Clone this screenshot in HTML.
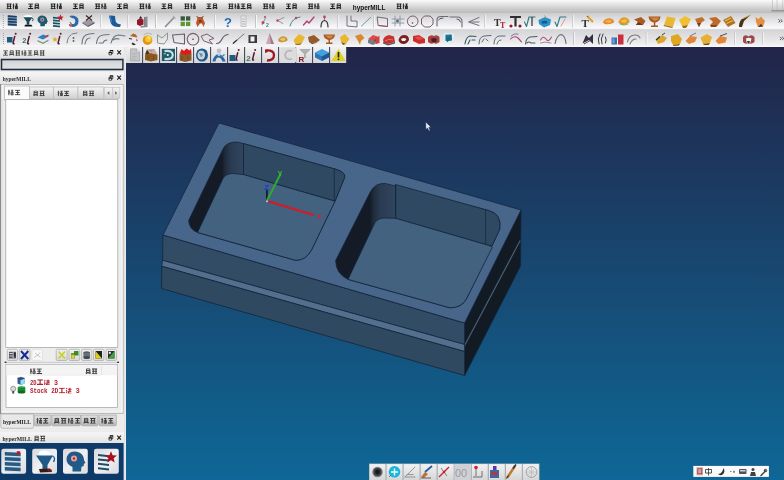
<!DOCTYPE html>
<html><head><meta charset="utf-8">
<style>
*{margin:0;padding:0}
html,body{width:784px;height:480px;overflow:hidden;background:#e8e8e8}
#wrap{position:absolute;left:0;top:0;width:784px;height:480px;will-change:transform}
svg{position:absolute;left:0;top:0;display:block}
</style></head><body><div id="wrap">
<svg width="784" height="480" viewBox="0 0 784 480" font-family="Liberation Sans">

<defs>
<symbol id="gl0" viewBox="0 0 6 6" preserveAspectRatio="none"><path d="M0 0.6 H6 M0.4 3 H5.6 M0 5.4 H6 M1.5 0 V6 M4.5 0 V6" stroke="#000" stroke-width="1.05" fill="none"/></symbol>
<symbol id="gl1" viewBox="0 0 6 6" preserveAspectRatio="none"><path d="M1 0 V6 M0 1.8 H2 M0 4 L2 3 M3 0.6 H6 M3.3 2.6 H5.7 V5.6 H3.3Z M4.5 0.6 V5.6" stroke="#000" stroke-width="1.0" fill="none"/></symbol>
<symbol id="gl2" viewBox="0 0 6 6" preserveAspectRatio="none"><path d="M0.3 0.7 H5.7 M3 0.7 V5.3 M0 5.3 H6 M1 3 H5" stroke="#000" stroke-width="1.1" fill="none"/></symbol>
<symbol id="gl3" viewBox="0 0 6 6" preserveAspectRatio="none"><path d="M1.2 0.5 H4.8 V4 H1.2Z M1.2 2.2 H4.8 M0 4.6 H6 M1.8 4.6 L0.6 6 M4.2 4.6 L5.4 6" stroke="#000" stroke-width="1.0" fill="none"/></symbol>
<symbol id="gr0" viewBox="0 0 6 6" preserveAspectRatio="none"><path d="M0.3 0.7 H5.7 M3 0.7 V5.3 M0 5.3 H6" stroke="#b0202c" stroke-width="1.15" fill="none"/></symbol>
<symbol id="gr1" viewBox="0 0 6 6" preserveAspectRatio="none"><path d="M0.6 0.6 L1.6 1.4 M0.3 2.6 L1.4 3.2 M0.4 5.8 L1.6 3.8 M2.5 1.8 H6 M4.2 0.2 V3.8 M2.6 3.8 H5.8 M3.4 3.8 L2.6 5.8 H5.8" stroke="#b0202c" stroke-width="1.05" fill="none"/></symbol>
<linearGradient id="gMenu" x1="0" y1="0" x2="0" y2="1"><stop offset="0" stop-color="#fafafa"/><stop offset="0.3" stop-color="#e6e6e6"/><stop offset="0.7" stop-color="#cbcbcb"/><stop offset="1" stop-color="#bcbcbc"/></linearGradient>
<linearGradient id="gTb1" x1="0" y1="0" x2="0" y2="1"><stop offset="0" stop-color="#cdcdcf"/><stop offset="0.45" stop-color="#e4e4e6"/><stop offset="0.85" stop-color="#f8f8fa"/><stop offset="1" stop-color="#f0f0f2"/></linearGradient>
<linearGradient id="gTb2" x1="0" y1="0" x2="0" y2="1"><stop offset="0" stop-color="#d6d6d8"/><stop offset="0.5" stop-color="#e4e4e6"/><stop offset="0.85" stop-color="#f0f0f2"/><stop offset="1" stop-color="#fafafa"/></linearGradient>
<linearGradient id="gVp" x1="0" y1="47" x2="0" y2="480" gradientUnits="userSpaceOnUse"><stop offset="0" stop-color="#22254a"/><stop offset="0.05" stop-color="#21284d"/><stop offset="0.49" stop-color="#18466f"/><stop offset="0.93" stop-color="#0f6391"/><stop offset="1" stop-color="#0e6797"/></linearGradient>
<linearGradient id="gTitle" x1="0" y1="0" x2="0" y2="1"><stop offset="0" stop-color="#f6f6f6"/><stop offset="1" stop-color="#e2e2e2"/></linearGradient>
<linearGradient id="gSearch" x1="0" y1="0" x2="0" y2="1"><stop offset="0" stop-color="#d2d2d4"/><stop offset="1" stop-color="#e4e4e8"/></linearGradient>
<linearGradient id="gTab" x1="0" y1="0" x2="0" y2="1"><stop offset="0" stop-color="#f4f4f4"/><stop offset="0.5" stop-color="#e2e2e2"/><stop offset="1" stop-color="#cfcfcf"/></linearGradient>
<linearGradient id="gBtab" x1="0" y1="0" x2="0" y2="1"><stop offset="0" stop-color="#dedede"/><stop offset="0.6" stop-color="#cecece"/><stop offset="1" stop-color="#b4b4b4"/></linearGradient>
<linearGradient id="gBtn" x1="0" y1="0" x2="0" y2="1"><stop offset="0" stop-color="#f0f0f0"/><stop offset="1" stop-color="#d8d8d8"/></linearGradient>
<linearGradient id="gTile" x1="0" y1="0" x2="1" y2="1"><stop offset="0" stop-color="#d8d8dc"/><stop offset="0.5" stop-color="#f0f0f2"/><stop offset="1" stop-color="#dcdce0"/></linearGradient>
<linearGradient id="gVtb" x1="0" y1="0" x2="0" y2="1"><stop offset="0" stop-color="#f2f2f2"/><stop offset="1" stop-color="#d6d6d8"/></linearGradient>
<linearGradient id="lw1" x1="222" y1="0" x2="244" y2="0" gradientUnits="userSpaceOnUse"><stop offset="0" stop-color="#141b26"/><stop offset="0.15" stop-color="#202c3c"/><stop offset="0.4" stop-color="#2a3b51"/><stop offset="1" stop-color="#30465f"/></linearGradient>
<linearGradient id="lw2" x1="370" y1="0" x2="395" y2="0" gradientUnits="userSpaceOnUse"><stop offset="0" stop-color="#141b26"/><stop offset="0.15" stop-color="#202c3c"/><stop offset="0.4" stop-color="#2a3b51"/><stop offset="1" stop-color="#30465f"/></linearGradient>
</defs>

<rect x="0" y="0" width="784" height="13" fill="url(#gMenu)"/>
<rect x="0" y="13" width="784" height="17" fill="url(#gTb1)"/>
<rect x="0" y="29.5" width="784" height="1" fill="#c4c4c6"/>
<rect x="0" y="30.5" width="784" height="16.5" fill="url(#gTb2)"/>
<rect x="126" y="47" width="658" height="433" fill="url(#gVp)"/>
<use href="#gl0" x="6.40" y="3.3" width="5.4" height="6" opacity="0.85"/><use href="#gl1" x="12.50" y="3.3" width="5.4" height="6" opacity="0.85"/>
<use href="#gl2" x="28.00" y="3.3" width="5.4" height="6" opacity="0.85"/><use href="#gl3" x="34.10" y="3.3" width="5.4" height="6" opacity="0.85"/>
<use href="#gl0" x="50.40" y="3.3" width="5.4" height="6" opacity="0.85"/><use href="#gl1" x="56.50" y="3.3" width="5.4" height="6" opacity="0.85"/>
<use href="#gl2" x="72.70" y="3.3" width="5.4" height="6" opacity="0.85"/><use href="#gl3" x="78.80" y="3.3" width="5.4" height="6" opacity="0.85"/>
<use href="#gl0" x="95.00" y="3.3" width="5.4" height="6" opacity="0.85"/><use href="#gl1" x="101.10" y="3.3" width="5.4" height="6" opacity="0.85"/>
<use href="#gl2" x="116.80" y="3.3" width="5.4" height="6" opacity="0.85"/><use href="#gl3" x="122.90" y="3.3" width="5.4" height="6" opacity="0.85"/>
<use href="#gl0" x="139.20" y="3.3" width="5.4" height="6" opacity="0.85"/><use href="#gl1" x="145.30" y="3.3" width="5.4" height="6" opacity="0.85"/>
<use href="#gl2" x="161.20" y="3.3" width="5.4" height="6" opacity="0.85"/><use href="#gl3" x="167.30" y="3.3" width="5.4" height="6" opacity="0.85"/>
<use href="#gl0" x="184.20" y="3.3" width="5.4" height="6" opacity="0.85"/><use href="#gl1" x="190.30" y="3.3" width="5.4" height="6" opacity="0.85"/>
<use href="#gl2" x="206.20" y="3.3" width="5.4" height="6" opacity="0.85"/><use href="#gl3" x="212.30" y="3.3" width="5.4" height="6" opacity="0.85"/>
<use href="#gl0" x="228.20" y="3.3" width="5.4" height="6" opacity="0.85"/><use href="#gl1" x="234.30" y="3.3" width="5.4" height="6" opacity="0.85"/><use href="#gl2" x="240.40" y="3.3" width="5.4" height="6" opacity="0.85"/><use href="#gl3" x="246.50" y="3.3" width="5.4" height="6" opacity="0.85"/>
<use href="#gl0" x="263.00" y="3.3" width="5.4" height="6" opacity="0.85"/><use href="#gl1" x="269.10" y="3.3" width="5.4" height="6" opacity="0.85"/>
<use href="#gl2" x="285.80" y="3.3" width="5.4" height="6" opacity="0.85"/><use href="#gl3" x="291.90" y="3.3" width="5.4" height="6" opacity="0.85"/>
<use href="#gl0" x="308.00" y="3.3" width="5.4" height="6" opacity="0.85"/><use href="#gl1" x="314.10" y="3.3" width="5.4" height="6" opacity="0.85"/>
<use href="#gl2" x="330.00" y="3.3" width="5.4" height="6" opacity="0.85"/><use href="#gl3" x="336.10" y="3.3" width="5.4" height="6" opacity="0.85"/>
<use href="#gl0" x="396.40" y="3.3" width="5.4" height="6" opacity="0.85"/><use href="#gl1" x="402.50" y="3.3" width="5.4" height="6" opacity="0.85"/>
<text x="352.8" y="9.6" font-family="Liberation Sans" font-size="7.4" font-weight="bold" fill="#111" textLength="32.6" lengthAdjust="spacingAndGlyphs">hyperMILL</text>
<path d="M772.5 0 V11 M777 0 V11 M782.7 0 V11" stroke="#b0b0b0" stroke-width="0.5" fill="none"/><path d="M771.5 10.8 H784" stroke="#707070" stroke-width="0.8"/>
<rect x="2.8" y="15" width="1" height="1" fill="#a0a0a0"/><rect x="2.8" y="17" width="1" height="1" fill="#a0a0a0"/><rect x="2.8" y="19" width="1" height="1" fill="#a0a0a0"/><rect x="2.8" y="21" width="1" height="1" fill="#a0a0a0"/><rect x="2.8" y="23" width="1" height="1" fill="#a0a0a0"/><rect x="2.8" y="25" width="1" height="1" fill="#a0a0a0"/><rect x="2.8" y="27" width="1" height="1" fill="#a0a0a0"/>
<path d="M7.8 15.2 L16.8 16.0 L16.8 26.2 L7.8 25.6Z" fill="#7a9ac0"/><path d="M7.8 15.2 L16.8 16.0 L16.8 17.55 L7.8 16.95Z" fill="#1e3c5c"/><path d="M7.8 17.95 L16.8 18.75 L16.8 20.3 L7.8 19.7Z" fill="#1e3c5c"/><path d="M7.8 20.7 L16.8 21.5 L16.8 23.05 L7.8 22.45Z" fill="#1e3c5c"/><path d="M7.8 23.45 L16.8 24.25 L16.8 25.8 L7.8 25.2Z" fill="#1e3c5c"/>
<g transform="translate(23,14.7) scale(1.0)"><ellipse cx="5" cy="2" rx="4.2" ry="1.8" fill="#ffffff"/><path d="M0.5 2.5 L9.5 2.5 L6.3 7 L6.3 10 L3.7 10 L3.7 7Z" fill="#1a4a58"/><path d="M9 3 Q11 4 9.5 6.5" stroke="#1a4a58" stroke-width="0.9" fill="none"/><path d="M2 10 L8.5 10 L9.5 11.8 L1.5 11.8Z" fill="#101010"/></g>
<g transform="translate(37.5,14.899999999999999) scale(0.95)"><path d="M5 0.5 C8.3 0.5 10 2.8 10 5.2 L11 7 L10 7.5 L10 9 L8 9.5 L7.5 12 L3 12 L3 9 C1 8 0 6.5 0 5 C0 2.5 2 0.5 5 0.5Z" fill="#1a5a68"/><circle cx="5" cy="5" r="2.2" fill="#a090c0"/><circle cx="5" cy="5" r="0.9" fill="#c02030"/></g>
<path d="M53 16.7 L60 17.5 L60 27.7 L53 27.1Z" fill="#d8e4ea"/><path d="M53 16.7 L60 17.5 L60 19.05 L53 18.45Z" fill="#1e5060"/><path d="M53 19.45 L60 20.25 L60 21.8 L53 21.2Z" fill="#1e5060"/><path d="M53 22.2 L60 23.0 L60 24.55 L53 23.95Z" fill="#1e5060"/><path d="M53 24.95 L60 25.75 L60 27.3 L53 26.7Z" fill="#1e5060"/><polygon points="60.50,14.30 61.40,16.46 63.73,16.65 61.96,18.17 62.50,20.45 60.50,19.23 58.50,20.45 59.04,18.17 57.27,16.65 59.60,16.46" fill="#c0202c"/>
<path d="M71 15.5 Q78.5 15.5 78.5 21 Q78.5 27 72 27 L71 24.5 Q75.3 24.5 75.3 21 Q75.3 18 71.5 18Z" fill="#2a68a8"/><path d="M71 15.5 L69.5 16.5 L71.5 18Z" fill="#2a68a8"/><path d="M72 27 Q69 27 68.8 24 L71 24.5Z" fill="#c04030"/><path d="M70 22 Q70.5 24 72.5 24.5" stroke="#303030" stroke-width="0.8" fill="none"/>
<path d="M82.5 22 L89 19.5 L94.5 22 L88 25.5Z" fill="#9a9aa0"/><path d="M82.5 22 L88 25.5 L88 27 L82.5 23.6Z" fill="#707078"/><path d="M88 25.5 L94.5 22 L94.5 23.6 L88 27Z" fill="#5a5a62"/><path d="M86 15.5 L92 20.5 M92 15.5 L86 20.5" stroke="#40282a" stroke-width="1.3"/>
<rect x="100.5" y="15" width="0.8" height="13" fill="#b4b4b8"/><rect x="101.3" y="15" width="0.8" height="13" fill="#ffffff"/>
<path d="M109 15.8 Q112 15.2 115 16 L115.5 21 Q116.5 24 121 24.5 L120 27 Q113 27.5 111 23.5 Z" fill="#1d5a98"/><path d="M109 15.8 L111 23.5 L112 22 L110.8 16Z" fill="#3a80c0"/>
<rect x="127.5" y="15" width="0.8" height="13" fill="#b4b4b8"/><rect x="128.3" y="15" width="0.8" height="13" fill="#ffffff"/>
<path d="M137 20 L140 18.5 L143.5 19.5 L143.5 24.5 L140 26 L137 24.5Z" fill="#901828"/><path d="M139 18.8 L140.5 16 L142.5 18.5Z" fill="#402020"/><path d="M144.5 17 L147.5 16.5 L147.5 27 L140.5 27.8 L140.5 26.3 L144.5 25.5Z" fill="#8a8a90"/><path d="M144.5 17 L144.5 25.5" stroke="#5a5a60" stroke-width="0.6"/>
<rect x="155.2" y="15" width="0.8" height="13" fill="#b4b4b8"/><rect x="156.0" y="15" width="0.8" height="13" fill="#ffffff"/>
<path d="M165 27 L174.5 17" stroke="#8a8a90" stroke-width="1.6"/><path d="M173 16 l2.5 2.5" stroke="#b0b0b8" stroke-width="1.2"/>
<rect x="180.6" y="16.3" width="4.3" height="4.3" fill="#3a5a40"/><rect x="186" y="16.3" width="4.3" height="4.3" fill="#3a5a40"/><rect x="180.6" y="21.8" width="4.3" height="4.3" fill="#5a9a30"/><rect x="186" y="21.8" width="4.3" height="4.3" fill="#5a9a30"/>
<path d="M197.5 17 L202.5 17 L203.5 20 L205 23 L203.5 27 L202 23.5 L200 23.5 L197.5 27 L196 23 L197 20Z" fill="#b85a28"/><path d="M196.5 16 L198.5 18 M203.5 16 L201.5 18" stroke="#6a3018" stroke-width="0.9"/><path d="M199 20 h2.5 v2.5 h-2.5z" fill="#7a3818"/>
<rect x="214.0" y="15" width="0.8" height="13" fill="#b4b4b8"/><rect x="214.8" y="15" width="0.8" height="13" fill="#ffffff"/>
<text x="224" y="27" font-family="Liberation Sans" font-size="13" font-weight="bold" fill="#1e6cb0">?</text>
<rect x="241" y="16" width="5" height="10.5" fill="#e8e8ea" stroke="#a8a8b0" stroke-width="0.6"/><path d="M242 19 h3 M242 21.5 h3 M242 24 h3" stroke="#9090a0" stroke-width="0.6"/>
<rect x="255.3" y="15" width="0.8" height="13" fill="#b4b4b8"/><rect x="256.1" y="15" width="0.8" height="13" fill="#ffffff"/>
<path d="M262 25 L265.5 18" stroke="#5a9a7a" stroke-width="0.9"/><circle cx="263" cy="22.5" r="1.5" fill="#c04060"/><circle cx="265" cy="17" r="1" fill="#c04060"/><text x="266" y="27" font-size="5" font-weight="bold" fill="#3a7a8a" font-family="Liberation Sans">2</text>
<path d="M284 17.5 L277.5 20.5 L283 23.5" stroke="#8a8a98" stroke-width="0.9" fill="none" stroke-linecap="round" stroke-linejoin="round"/><circle cx="277.5" cy="20.5" r="1.2" fill="#c04070"/>
<path d="M290 26 Q292 18 300 17" stroke="#3a8a8a" stroke-width="1.0" fill="none" stroke-linecap="round" stroke-linejoin="round"/><circle cx="296" cy="18" r="1.2" fill="#c04070"/>
<path d="M303.5 25 L307 21 L309 23 L314 17" stroke="#b04070" stroke-width="1.3" fill="none" stroke-linecap="round" stroke-linejoin="round"/>
<path d="M321 27 Q321 21 324.5 20.5 Q328 21 328 27" stroke="#303038" stroke-width="1.2" fill="none" stroke-linecap="round" stroke-linejoin="round"/><circle cx="324.5" cy="17" r="1.4" fill="#c04070"/><path d="M324.5 18 v2" stroke="#606070" stroke-width="0.7"/>
<rect x="337.5" y="15" width="0.8" height="13" fill="#b4b4b8"/><rect x="338.3" y="15" width="0.8" height="13" fill="#ffffff"/>
<path d="M347 16 L347 26 L357 27 L357 21 L351 21 L351 16" stroke="#70707c" stroke-width="1.0" fill="none" stroke-linecap="round" stroke-linejoin="round"/>
<path d="M361.5 26 L370.5 17.5" stroke="#5a8a8a" stroke-width="0.9" fill="none" stroke-linecap="round" stroke-linejoin="round"/>
<rect x="373.0" y="15" width="0.8" height="13" fill="#b4b4b8"/><rect x="373.8" y="15" width="0.8" height="13" fill="#ffffff"/>
<path d="M377.5 17 L387.5 18.5 L387.5 26.5 L378.5 25.5Z" stroke="#6a6a78" stroke-width="1.0" fill="none" stroke-linecap="round" stroke-linejoin="round"/><path d="M378.5 25.5 L387.5 26.5" stroke="#c03050" stroke-width="0.8"/>
<path d="M392 19 H404 M392 23 H404 M395 16 V26 M400 16 V26" stroke="#7a8a9a" stroke-width="0.8" fill="none" stroke-linecap="round" stroke-linejoin="round"/><circle cx="397.5" cy="21" r="1.5" fill="#606878"/>
<circle cx="412.7" cy="21.3" r="5.3" stroke="#7a5a68" stroke-width="1.0" fill="none"/><circle cx="412.5" cy="23" r="0.8" fill="#404050"/>
<polygon points="424.5,16 430,16 433,19 433,24 430,27 424.5,27 421.5,24 421.5,19" stroke="#7a5a68" stroke-width="1.0" fill="none"/>
<path d="M437 26 V20 Q437 16.5 441 16.5 H448" stroke="#6a6a78" stroke-width="1.1" fill="none" stroke-linecap="round" stroke-linejoin="round"/><path d="M438.5 20 Q439 18 443 18" stroke="#303040" stroke-width="0.8" fill="none" stroke-linecap="round" stroke-linejoin="round"/>
<path d="M450 17 H457 Q462 17 462 22 V27" stroke="#6a6a78" stroke-width="1.1" fill="none" stroke-linecap="round" stroke-linejoin="round"/><path d="M457 19 Q460 19 460.5 22" stroke="#303040" stroke-width="0.8" fill="none" stroke-linecap="round" stroke-linejoin="round"/>
<path d="M479 17.5 L468.5 22 L479 25.5 M470 22 H479" stroke="#707080" stroke-width="1.0" fill="none" stroke-linecap="round" stroke-linejoin="round"/>
<rect x="484.5" y="15" width="0.8" height="13" fill="#b4b4b8"/><rect x="485.3" y="15" width="0.8" height="13" fill="#ffffff"/>
<text x="494" y="25.5" font-family="Liberation Serif" font-size="10" font-weight="bold" fill="#333">T</text><text x="500" y="28" font-family="Liberation Serif" font-size="8" font-weight="bold" fill="#b02030">T</text>
<path d="M510 17 H521 M515.5 17 V26.5" stroke="#303030" stroke-width="2.2"/><circle cx="511" cy="26" r="1.6" fill="#901828"/><circle cx="520" cy="26" r="1.6" fill="#901828"/>
<path d="M524.5 22 L526.5 26.5 L529 17 H535" stroke="#2a7a80" stroke-width="1.1" fill="none" stroke-linecap="round" stroke-linejoin="round"/><path d="M532 17 V26" stroke="#303038" stroke-width="1.2"/>
<path d="M538.5 20 L545 17 L551 19.5 L550 25 L544 27.5 L539 24Z" fill="#2c92cc"/><path d="M541 22 Q545 19.5 548 22 L546 24 Q544.5 22.5 543 24Z" fill="#1a5a8a"/><path d="M544 15.5 L546 17" stroke="#e0a040" stroke-width="1"/>
<path d="M555 22 L557 26.5 L560 17 H566" stroke="#2a7a80" stroke-width="1.1" fill="none" stroke-linecap="round" stroke-linejoin="round"/><path d="M561 26 L565 19" stroke="#d08090" stroke-width="0.8" fill="none" stroke-linecap="round" stroke-linejoin="round"/>
<rect x="572.5" y="15" width="0.8" height="13" fill="#b4b4b8"/><rect x="573.3" y="15" width="0.8" height="13" fill="#ffffff"/>
<text x="581.5" y="27" font-family="Liberation Serif" font-size="11" font-weight="bold" fill="#333">T</text><path d="M588 17 L593 22" stroke="#e0a020" stroke-width="2"/><path d="M587 16 l1.2 1.2" stroke="#906020" stroke-width="1.2"/>
<g transform="translate(608.75,21.25) rotate(0)"><path d="M-5.75 0.65 Q-3.4499999999999997 -3.25 1.1500000000000001 -2.9250000000000003 Q5.75 -1.95 5.175 1.3 Q2.3000000000000003 3.25 -2.3000000000000003 2.9250000000000003 Q-5.75 2.275 -5.75 0.65Z" fill="#e88a28"/><path d="M-4.0249999999999995 0.325 Q-1.1500000000000001 -1.95 2.3000000000000003 -1.3 Q3.4499999999999997 0.65 0 1.625Z" fill="#f4b040"/></g>
<g transform="translate(624.25,21.0) rotate(0)"><path d="M-5.75 0.8 Q-3.4499999999999997 -4.0 1.1500000000000001 -3.6 Q5.75 -2.4 5.175 1.6 Q2.3000000000000003 4.0 -2.3000000000000003 3.6 Q-5.75 2.8 -5.75 0.8Z" fill="#e0982c"/><path d="M-4.0249999999999995 0.4 Q-1.1500000000000001 -2.4 2.3000000000000003 -1.6 Q3.4499999999999997 0.8 0 2.0Z" fill="#f0c040"/></g><path d="M620 24 Q624 26 628 24" stroke="#6a9a40" stroke-width="0.8" fill="none"/>
<path d="M634 19.5 L641 17 L645.5 21 L643 25 L636 25 L638 22Z" fill="#a85a22"/><path d="M638 22 L643 25 L636 25Z" fill="#6a3818"/>
<path d="M648.5 16.5 H660.5 Q660 21.5 655.3 22.5 V25.5 H658 V27 H651 V25.5 H653.8 V22.5 Q649 21.5 648.5 16.5Z" fill="#a85820"/><path d="M650 17.5 H659 Q658 20.5 654.5 21Z" fill="#d08840"/>
<path d="M664 25 L667 16.5 L675.5 18 L673 27Z" fill="#e8b830"/><path d="M664 25 L673 27 L672 28 L663.5 26Z" fill="#a07020"/>
<path d="M679 20 L685 16 L691 19 L688 25 L682 26Z" fill="#f0c030"/><path d="M682 26 L688 25 L686 28 L683 28Z" fill="#a06820"/>
<path d="M695 19 L702 17 L705 20 L701 23 L699 27 L697 23Z" fill="#c0702c"/><path d="M697 23 L701 23 L699 27Z" fill="#7a4018"/>
<path d="M709 18 L716 17 L721 21 L718 25 L710 25 L713 22Z" fill="#c06a28"/><path d="M710 25 L718 25 L716 27 L711 27Z" fill="#8a4818"/>
<path d="M723 20 L731 16 L735.5 23 L728 27Z" fill="#b07028"/><path d="M725 21 L731 18 M726.5 23.5 L733 20.5" stroke="#f0c040" stroke-width="1.3"/>
<path d="M739 27 Q739 20 743 18.5 L750.5 15 L744 21 L742 27Z" fill="#4a3018"/><path d="M743 18.5 L750.5 15" stroke="#d0a040" stroke-width="1"/>
<path d="M755.5 17 L758.5 19 L761 16.5 L765 21 L763 26.5 L758 27 L756 22Z" fill="#e09040"/><path d="M758 27 L763 26.5 L761 24Z" fill="#303030"/>
<path d="M778.5 19.3 l1.6 1.6 l-1.6 1.6 M780.7 19.3 l1.6 1.6 l-1.6 1.6" stroke="#333" stroke-width="0.8" fill="none"/>
<rect x="3" y="33" width="1" height="1" fill="#a0a0a0"/><rect x="3" y="35" width="1" height="1" fill="#a0a0a0"/><rect x="3" y="37" width="1" height="1" fill="#a0a0a0"/><rect x="3" y="39" width="1" height="1" fill="#a0a0a0"/><rect x="3" y="41" width="1" height="1" fill="#a0a0a0"/><rect x="3" y="43" width="1" height="1" fill="#a0a0a0"/>
<rect x="7" y="37" width="5.5" height="5.5" fill="#1d5a80"/><path d="M14.7 36.5 L13.1 43.0 Q12.9 44.0 14.1 43.7" stroke="#5a1838" stroke-width="1.5" fill="none" stroke-linecap="round"/><circle cx="15.7" cy="33.7" r="1" fill="#5a1838"/>
<text x="22.3" y="43" font-family="Liberation Sans" font-size="7.5" font-weight="bold" fill="#3a7050">2</text><path d="M29.2 36.5 L27.6 43.0 Q27.4 44.0 28.6 43.7" stroke="#5a1838" stroke-width="1.5" fill="none" stroke-linecap="round"/><circle cx="30.2" cy="33.7" r="1" fill="#5a1838"/>
<path d="M37.5 37.5 L43 34.5 L48.5 36.5 L43 39.5Z" fill="#3080c0"/><path d="M43 37 L48.5 34.5 L48.5 36.5" fill="#d03030"/><path d="M37.5 40 L43 42.5 L48.5 39.5 L48.5 41 L43 44 L37.5 41.5Z" fill="#7a9a80"/>
<polygon points="55.00,36.50 55.79,38.41 57.85,38.57 56.28,39.92 56.76,41.93 55.00,40.85 53.24,41.93 53.72,39.92 52.15,38.57 54.21,38.41" fill="#d8b030"/><path d="M59.7 36.5 L58.1 43.0 Q57.9 44.0 59.1 43.7" stroke="#5a1838" stroke-width="1.5" fill="none" stroke-linecap="round"/><circle cx="60.7" cy="33.7" r="1" fill="#5a1838"/>
<path d="M67 43 Q68 36 71 35 M72 34 L77 33" stroke="#70808a" stroke-width="1.0" fill="none" stroke-linecap="round" stroke-linejoin="round"/><circle cx="73.5" cy="41" r="0.9" fill="#505860"/><circle cx="73.5" cy="38" r="0.9" fill="#505860"/>
<path d="M82 44 Q82 35 89 34 L94 33.5 M85 44 Q86 38 90 38" stroke="#6a7880" stroke-width="1.1" fill="none" stroke-linecap="round" stroke-linejoin="round"/>
<path d="M96.5 43.5 Q97 36 103 35 L109 34.5 M99 43 L102 43 M103 43 Q104 40 107 40" stroke="#6a7880" stroke-width="1.1" fill="none" stroke-linecap="round" stroke-linejoin="round"/>
<path d="M111 43 Q113 35 119 35 L125 36 M113 40 Q116 38 119 39" stroke="#6a7880" stroke-width="1.1" fill="none" stroke-linecap="round" stroke-linejoin="round"/>
<path d="M128.5 38.5 L133 36 L138 38.5 L134 43 Z" fill="#e8e8ea"/><path d="M130 36 L133 33.5 L136 34.5 L137.5 37.5 L134 37Z" fill="#b06a30"/><path d="M129 38.5 L132 39" stroke="#303030" stroke-width="1.2"/><path d="M132.5 42.5 L136 44.5 L133.5 45.3 L131.5 44Z" fill="#2a2a2a"/><path d="M136 38.5 L138 40.5 L136.5 41.5" fill="#a06030"/>
<circle cx="147.5" cy="40.2" r="4.8" fill="#e89018"/><circle cx="148.3" cy="39" r="3.2" fill="#f4c828"/><circle cx="149" cy="38" r="1.4" fill="#fae070"/><path d="M143.5 35 Q147.5 31.5 152 34.5" stroke="#a8a8a8" stroke-width="0.8" fill="none"/>
<path d="M157.5 35 L157.5 43 L164 44 L167.5 39 L167.5 33 L162 38 L157.5 35" stroke="#8a9890" stroke-width="1.0" fill="none" stroke-linecap="round" stroke-linejoin="round"/>
<path d="M172.5 35 L184.5 34 L184.5 44 L174 42.5Z" stroke="#6a5a70" stroke-width="1.1" fill="none" stroke-linecap="round" stroke-linejoin="round"/>
<circle cx="193" cy="39.2" r="5.8" stroke="#7a6070" stroke-width="1.1" fill="none"/><circle cx="193" cy="39.2" r="0.8" fill="#404050"/>
<path d="M201.5 36 L207 34 L214 38.5 L209 40 L212.5 44 L204 41Z" stroke="#7a6070" stroke-width="1.0" fill="none" stroke-linecap="round" stroke-linejoin="round"/>
<path d="M216.5 43.5 Q220 43.5 222 39 Q224 35 228 34.5" stroke="#6a5a70" stroke-width="1.2" fill="none" stroke-linecap="round" stroke-linejoin="round"/>
<path d="M233 43.5 L244 34" stroke="#7a7080" stroke-width="1.0" fill="none" stroke-linecap="round" stroke-linejoin="round"/><path d="M233 43.5 L237 40" stroke="#303040" stroke-width="1.2"/>
<path d="M248.5 35 L257 35 L257 43 L248.5 43Z" fill="#3a3a3a"/><rect x="250.5" y="36.5" width="4" height="5" fill="#f0f0f0"/>
<path d="M266 44 L269.5 33 L274 44Z" fill="#c8a8b8"/><path d="M269.5 33 L274 44 L271 44Z" fill="#a07888"/>
<g transform="translate(283.0,39.25) rotate(0)"><path d="M-5.0 0.65 Q-3.0 -3.25 1.0 -2.9250000000000003 Q5.0 -1.95 4.5 1.3 Q2.0 3.25 -2.0 2.9250000000000003 Q-5.0 2.275 -5.0 0.65Z" fill="#c89840"/><path d="M-3.5 0.325 Q-1.0 -1.95 2.0 -1.3 Q3.0 0.65 0 1.625Z" fill="#e8c860"/></g>
<path d="M293.5 40 L299 34 L305 37 L302 43 L295 44Z" fill="#e8b830"/><path d="M295 44 L302 43 L300 45 L296 45Z" fill="#a07020"/>
<path d="M308 37 L314 35 L320 40 L316 43 L309 42Z" fill="#9a5a28"/><path d="M309 42 L316 43 L312 44Z" fill="#5a3018"/>
<path d="M323.5 34.5 H335 Q334.5 39 330 40 V42.5 H332.5 V44 H326 V42.5 H328.5 V40 Q324 39 323.5 34.5Z" fill="#a85a20"/><path d="M325 35.5 H333.5 Q332.5 38 329 38.5Z" fill="#d08840"/>
<path d="M340 37 L345 34 L349.5 39 L346 44 L341 42Z" fill="#e8b830"/><path d="M341 42 L346 44 L343 45Z" fill="#805018"/>
<path d="M355 36 L361 34 L364.5 38 L361 41 L360 45 L358 41Z" fill="#d88a30"/>
<path d="M368 40 L373 36 L379 38 L379 42 L373 45 L368 43Z" fill="#7a7a80"/><path d="M368 39 L373 35 L379 37 L374 40Z" fill="#e04848"/><path d="M374 40 L379 37 L379 39 L374 42Z" fill="#b03030"/>
<path d="M376 39 L379.5 35.5 L379.5 43 L376 44Z" fill="#d84040"/>
<path d="M383 40 Q384 36 389 35 L394 36.5 L395 42 L388 44 L384 43Z" fill="#c83030"/><path d="M385 41 Q389 38 393 40" stroke="#f08080" stroke-width="0.8" fill="none"/><path d="M383 42 L388 44 L395 42 L395 43.5 L388 45.5 L383 43.5Z" fill="#5a5a60"/>
<path d="M398.5 40 Q400 35 404 35 Q409 35 409 40 Q407 44 403.5 44 Q399.5 44 398.5 40Z" fill="#7a2020"/><path d="M401 39 Q403.5 37 406.5 39 L405 41 L402 41Z" fill="#f0f0f0"/>
<path d="M413 36 L419 35 L425 39 L425 43 L419 44 L413 41Z" fill="#c83030"/><path d="M415 37 L420 36.5 L423 39 L418 40Z" fill="#f04848"/>
<path d="M428 37 Q431 34 434 36 Q437 34 439.5 37 L439.5 42 Q436 45 434 43 Q431 45 428 42Z" fill="#a84040"/><path d="M431 39 Q434 37 437 39 L436 42 L432 42Z" fill="#4a2020"/>
<rect x="443.5" y="33" width="10.5" height="10" rx="2" fill="#dceef4"/><path d="M445.5 34.8 L451.7 34.5 L452 40.5 L448.5 41 L447.5 42.3 L446.5 41 L445.5 40.8Z" fill="#1a6a82"/><path d="M446.5 36 h3" stroke="#3a9ab0" stroke-width="0.7"/>
<path d="M465 44 Q466 37 470 36 L476 36.5 M468 44 L470 40 M472 40 H475" stroke="#3a5a68" stroke-width="1.1" fill="none" stroke-linecap="round" stroke-linejoin="round"/>
<path d="M479 44 Q479 37 484 36 L491 35.5 M482 42 L484 39 M486 39 L488 41" stroke="#5a6a78" stroke-width="1.0" fill="none" stroke-linecap="round" stroke-linejoin="round"/>
<path d="M494 44 Q494 37 499 36 L505 36 M497 44 Q498 40 501 40" stroke="#5a6a78" stroke-width="1.0" fill="none" stroke-linecap="round" stroke-linejoin="round"/>
<path d="M510.5 39 Q514 35 518 38 Q520 40 521.5 42" stroke="#b04070" stroke-width="1.1" fill="none" stroke-linecap="round" stroke-linejoin="round"/><path d="M511 36 Q514 33 518 34" stroke="#5a6a78" stroke-width="0.8" fill="none" stroke-linecap="round" stroke-linejoin="round"/>
<path d="M525.5 44 Q526 38 530 37 L537 36.5 M527 43 Q529 41 531 43 L535 43" stroke="#4a5a68" stroke-width="1.1" fill="none" stroke-linecap="round" stroke-linejoin="round"/>
<path d="M540.5 40 Q543 35 546 39 Q548.5 43 551.5 37" stroke="#b05078" stroke-width="1.1" fill="none" stroke-linecap="round" stroke-linejoin="round"/><path d="M540.5 43 Q545 41 551 43" stroke="#6a7a88" stroke-width="0.8" fill="none" stroke-linecap="round" stroke-linejoin="round"/>
<path d="M555 43.5 Q557 35 561 34.5 Q565 35 566 43.5" stroke="#6a6a78" stroke-width="1.1" fill="none" stroke-linecap="round" stroke-linejoin="round"/>
<rect x="573.3" y="32.5" width="0.8" height="12.5" fill="#b4b4b8"/><rect x="574.0999999999999" y="32.5" width="0.8" height="12.5" fill="#ffffff"/>
<path d="M582.5 43.5 L586 35 L589 38 L593 34 L593 44 L589 40 Z" fill="#303040"/><path d="M584 44 L591 40" stroke="#6a4060" stroke-width="1"/>
<path d="M599 44 Q597 39 600 34 M602 44 Q600 39 603 34 M605.5 37 Q607 40 605.5 43" stroke="#3a3a48" stroke-width="1.0" fill="none" stroke-linecap="round" stroke-linejoin="round"/>
<rect x="611.5" y="37.5" width="5.5" height="7" fill="#3a70b0"/><rect x="618" y="34.5" width="5.5" height="10" fill="#c83040"/><rect x="612.5" y="38.5" width="2" height="5" fill="#6aa0d8"/>
<path d="M627.5 42 Q629 35 635 35 Q639 35 640 38 M630 44 Q632 39 636 39" stroke="#7a7a80" stroke-width="1.1" fill="none" stroke-linecap="round" stroke-linejoin="round"/>
<rect x="645.8" y="32.5" width="0.8" height="12.5" fill="#b4b4b8"/><rect x="646.5999999999999" y="32.5" width="0.8" height="12.5" fill="#ffffff"/>
<path d="M656 40 L662 35 L667 38 L664 42 L658 44Z" fill="#d8a830"/><path d="M656 40 L660 36.5" stroke="#303030" stroke-width="1.2"/><path d="M662 35 L665 33" stroke="#404040" stroke-width="1"/>
<path d="M671 36 L678 34 L682 39 L680 44 L673 45 L671 41Z" fill="#e0a820"/><path d="M673 45 L680 44 L679 45.5 L673.5 46Z" fill="#805018"/>
<path d="M685.5 41 L690 36 L697 37 L695 42 L689 44Z" fill="#e08838"/><path d="M690 36 L696 33" stroke="#606060" stroke-width="0.8"/>
<path d="M700.5 37.5 L707 34 L712 37 L710 43 L703 44Z" fill="#e8b030"/><path d="M703 44 L710 43 L708.5 45 L704 45Z" fill="#705018"/>
<path d="M715.5 41 L720 36 L727 37.5 L725.5 42.5 L718.5 44Z" fill="#e08838"/><path d="M720 36 L727 33.5" stroke="#404040" stroke-width="0.9"/>
<rect x="734.0" y="32.5" width="0.8" height="12.5" fill="#b4b4b8"/><rect x="734.8" y="32.5" width="0.8" height="12.5" fill="#ffffff"/>
<path d="M743 37 Q745 34 748.5 36.5 Q752 34 754.5 37 L754.5 42 Q751 45 748.5 43 Q745.5 45 743 42Z" fill="#9a4848"/><path d="M746 38.5 Q748.5 37 751.5 38.5 L750.5 42.5 L746.5 42.5Z" fill="#f0f0f0"/><path d="M747 41 L748.5 44 L750 41" fill="#303030"/>
<rect x="762.5" y="32.5" width="0.8" height="12.5" fill="#b4b4b8"/><rect x="763.3" y="32.5" width="0.8" height="12.5" fill="#ffffff"/>
<path d="M780 36.8 l1.6 1.6 l-1.6 1.6 M782.2 36.8 l1.6 1.6 l-1.6 1.6" stroke="#333" stroke-width="0.8" fill="none"/>
<rect x="0" y="47" width="126" height="433" fill="#ececec"/>
<rect x="0" y="47.5" width="124" height="10.5" fill="url(#gTitle)"/>
<use href="#gl2" x="3.00" y="50.2" width="5.2" height="5.6" opacity="0.7"/><use href="#gl3" x="9.10" y="50.2" width="5.2" height="5.6" opacity="0.7"/><use href="#gl0" x="15.20" y="50.2" width="5.2" height="5.6" opacity="0.7"/><use href="#gl1" x="21.30" y="50.2" width="5.2" height="5.6" opacity="0.7"/><use href="#gl2" x="27.40" y="50.2" width="5.2" height="5.6" opacity="0.7"/><use href="#gl3" x="33.50" y="50.2" width="5.2" height="5.6" opacity="0.7"/><use href="#gl0" x="39.60" y="50.2" width="5.2" height="5.6" opacity="0.7"/>
<path d="M110.2 50.6 h2.6 v2.8 h-2.6z" stroke="#111" stroke-width="0.7" fill="#f4f4f4"/><rect x="109.8" y="50.0" width="3.4" height="1.1" fill="#111"/><path d="M109 52.6 h2.6 v2.2 h-2.6z" stroke="#111" stroke-width="0.7" fill="#ffffff"/><rect x="108.6" y="52.1" width="3.4" height="1" fill="#111"/><path d="M117.3 50.3 l3.6 4 M120.9 50.3 l-3.6 4" stroke="#1a1a1a" stroke-width="1.05"/>
<rect x="1.5" y="59.5" width="121.5" height="10" fill="url(#gSearch)" stroke="#1c2e40" stroke-width="1.6"/>
<rect x="0" y="72.3" width="124" height="10.5" fill="url(#gTitle)"/>
<text x="2.8" y="81.2" font-family="Liberation Serif" font-size="7" font-weight="bold" fill="#2a2a2a" textLength="28" lengthAdjust="spacingAndGlyphs">hyperMILL</text>
<path d="M110.2 76.0 h2.6 v2.8 h-2.6z" stroke="#111" stroke-width="0.7" fill="#f4f4f4"/><rect x="109.8" y="75.4" width="3.4" height="1.1" fill="#111"/><path d="M109 78.0 h2.6 v2.2 h-2.6z" stroke="#111" stroke-width="0.7" fill="#ffffff"/><rect x="108.6" y="77.5" width="3.4" height="1" fill="#111"/><path d="M117.3 75.7 l3.6 4 M120.9 75.7 l-3.6 4" stroke="#1a1a1a" stroke-width="1.05"/>
<rect x="0.8" y="84.3" width="122.5" height="329" fill="#ededed" stroke="#a6a6a6" stroke-width="0.8"/>
<rect x="0" y="84" width="1" height="330" fill="#8a8a8a"/><rect x="2.2" y="99" width="0.8" height="312" fill="#b8b8b8"/>
<rect x="2.2" y="85.5" width="119.6" height="326.5" fill="none" stroke="#fafafa" stroke-width="0.8"/>
<rect x="29.5" y="87" width="24" height="12" fill="url(#gTab)" stroke="#b4b4b4" stroke-width="0.6"/>
<rect x="53.5" y="87" width="24.5" height="12" fill="url(#gTab)" stroke="#b4b4b4" stroke-width="0.6"/>
<rect x="78" y="87" width="25.5" height="12" fill="url(#gTab)" stroke="#b4b4b4" stroke-width="0.6"/>
<rect x="104.3" y="87.5" width="8" height="11" fill="url(#gTab)" stroke="#c0c0c0" stroke-width="0.6"/>
<rect x="112.8" y="87.5" width="7" height="11" fill="url(#gTab)" stroke="#c0c0c0" stroke-width="0.6"/>
<path d="M109.3 91.2 l-2 1.8 l2 1.8z M115.2 91.2 l2 1.8 l-2 1.8z" fill="#555"/>
<rect x="4.3" y="86" width="25.2" height="14" fill="#fbfbfb" stroke="#a8a8a8" stroke-width="0.6"/>
<use href="#gl1" x="8.00" y="89.5" width="5.6" height="6" opacity="0.75"/><use href="#gl2" x="14.80" y="89.5" width="5.6" height="6" opacity="0.75"/>
<use href="#gl3" x="33.00" y="90.5" width="5.4" height="5.8" opacity="0.72"/><use href="#gl0" x="39.40" y="90.5" width="5.4" height="5.8" opacity="0.72"/>
<use href="#gl1" x="57.50" y="90.5" width="5.4" height="5.8" opacity="0.72"/><use href="#gl2" x="63.90" y="90.5" width="5.4" height="5.8" opacity="0.72"/>
<use href="#gl3" x="82.50" y="90.5" width="5.4" height="5.8" opacity="0.72"/><use href="#gl0" x="88.90" y="90.5" width="5.4" height="5.8" opacity="0.72"/>
<rect x="5.8" y="99.5" width="112" height="248" fill="#ffffff" stroke="#a0a0a0" stroke-width="0.7"/>
<rect x="7.3" y="349.3" width="10.2" height="11.199999999999989" rx="1.2" fill="url(#gBtn)" stroke="#a8a8a8" stroke-width="0.7"/>
<rect x="19.2" y="349.3" width="10.8" height="11.199999999999989" rx="1.2" fill="url(#gBtn)" stroke="#a8a8a8" stroke-width="0.7"/>
<rect x="32" y="349.5" width="10.5" height="10.8" rx="1.2" fill="#f8f8f8" stroke="#d8d8d8" stroke-width="0.6"/>
<rect x="56.2" y="349.3" width="11.0" height="11.199999999999989" rx="1.2" fill="url(#gBtn)" stroke="#a8a8a8" stroke-width="0.7"/>
<rect x="69" y="349.3" width="10.700000000000003" height="11.199999999999989" rx="1.2" fill="url(#gBtn)" stroke="#a8a8a8" stroke-width="0.7"/>
<rect x="81.6" y="349.3" width="10.200000000000003" height="11.199999999999989" rx="1.2" fill="url(#gBtn)" stroke="#a8a8a8" stroke-width="0.7"/>
<rect x="93.5" y="349.3" width="10.5" height="11.199999999999989" rx="1.2" fill="url(#gBtn)" stroke="#a8a8a8" stroke-width="0.7"/>
<rect x="106" y="349.3" width="10.599999999999994" height="11.199999999999989" rx="1.2" fill="url(#gBtn)" stroke="#a8a8a8" stroke-width="0.7"/>
<rect x="9" y="351.8" width="7" height="6.6" fill="#505058"/><path d="M9.5 353.5 h3 M9.5 356 h3 M13.2 352.3 v5.6" stroke="#e8e8f0" stroke-width="0.9"/><rect x="13.8" y="353" width="1.8" height="3.6" fill="#2a2a32"/>
<path d="M21 351 L28.3 359 M28.3 351 L21 359" stroke="#1a2a98" stroke-width="2"/>
<path d="M34 357.5 L38 355 L40 352.5 M35 353 L38 355.5 L40.5 357" stroke="#c0c0c8" stroke-width="0.9" fill="none"/>
<path d="M58.5 351.5 L65 358.5 M65 351.5 L58.5 358.5" stroke="#c8d020" stroke-width="1.6"/>
<rect x="71" y="353" width="4" height="5.5" fill="#7a9a20"/><rect x="74" y="351" width="4.5" height="4.5" fill="#3a8a28"/><rect x="71.5" y="355" width="3" height="3" fill="#e0d030"/>
<ellipse cx="86.7" cy="352.8" rx="3.3" ry="1.5" fill="#505860"/><rect x="83.4" y="352.8" width="6.6" height="4.6" fill="#6a7078"/><ellipse cx="86.7" cy="357.4" rx="3.3" ry="1.5" fill="#40484e"/>
<rect x="95.5" y="351" width="6.5" height="7.5" fill="#202020"/><path d="M95.5 351 L102 358.5 L95.5 358.5Z" fill="#d8d020"/>
<rect x="108" y="351" width="6.5" height="7.5" fill="#303030"/><path d="M108 358.5 L114.5 351 L114.5 358.5Z" fill="#40a040"/><rect x="108.8" y="351.8" width="2" height="2" fill="#f0f0f0"/>
<line x1="6" y1="362.4" x2="118" y2="362.4" stroke="#c4c4cc" stroke-width="0.9"/>
<rect x="4.6" y="361.6" width="1.8" height="1.4" fill="#303040"/><rect x="117.2" y="361.6" width="1.8" height="1.4" fill="#303040"/>
<rect x="6" y="364.4" width="111.6" height="43" fill="#ffffff" stroke="#a0a0a0" stroke-width="0.7"/>
<rect x="6.4" y="364.8" width="110.8" height="10.5" fill="#f4f4f4"/>
<line x1="28" y1="375.2" x2="100" y2="375.2" stroke="#e4e4e4" stroke-width="0.6"/>
<use href="#gl1" x="30.00" y="368.3" width="5.6" height="6" opacity="0.75"/><use href="#gl2" x="36.40" y="368.3" width="5.6" height="6" opacity="0.75"/>
<use href="#gl3" x="85.40" y="368.3" width="5.6" height="6" opacity="0.75"/><use href="#gl0" x="91.80" y="368.3" width="5.6" height="6" opacity="0.75"/>
<line x1="101.5" y1="366" x2="101.5" y2="375" stroke="#d8d8d8" stroke-width="0.6"/>
<path d="M17.5 378 L21 376.8 L24.5 378 L24.5 383.5 L21 385 L17.5 383.5Z" fill="#3a5a98"/><path d="M20.5 380 L24.5 378.8 L24.5 383.5 L21 385 L20.5 385Z" fill="#90e0f0"/><path d="M17.5 378 L21 379.3 L24.5 378" stroke="#203060" stroke-width="0.6" fill="none"/><circle cx="13.2" cy="388.8" r="2.6" fill="#d8d8d8" stroke="#707070" stroke-width="0.6"/><rect x="12.2" y="391" width="2" height="2.6" fill="#505050"/><ellipse cx="21.5" cy="387.5" rx="3.8" ry="1.6" fill="#30c050"/><rect x="17.7" y="387.5" width="7.6" height="4.5" fill="#1a8a30"/><ellipse cx="21.5" cy="392" rx="3.8" ry="1.6" fill="#106a20"/>
<text x="30" y="384.8" font-family="Liberation Mono" font-size="7.2" font-weight="bold" fill="#b0202c" textLength="6.6" lengthAdjust="spacingAndGlyphs">2D</text>
<use href="#gr0" x="37.00" y="379.2" width="6.2" height="5.8" opacity="1"/><use href="#gr1" x="43.70" y="379.2" width="6.2" height="5.8" opacity="1"/>
<text x="54" y="384.8" font-family="Liberation Mono" font-size="7.2" font-weight="bold" fill="#b0202c" textLength="4" lengthAdjust="spacingAndGlyphs">3</text>
<text x="30" y="393.2" font-family="Liberation Mono" font-size="7.2" font-weight="bold" fill="#b0202c" textLength="28.2" lengthAdjust="spacingAndGlyphs">Stock 2D</text>
<use href="#gr0" x="58.80" y="387.6" width="6.2" height="5.8" opacity="1"/><use href="#gr1" x="65.50" y="387.6" width="6.2" height="5.8" opacity="1"/>
<text x="75.8" y="393.2" font-family="Liberation Mono" font-size="7.2" font-weight="bold" fill="#b0202c" textLength="4" lengthAdjust="spacingAndGlyphs">3</text>
<path d="M34.3 415 H51 V424.3 Q51 425.8 49.5 425.8 H35.8 Q34.3 425.8 34.3 424.3Z" fill="url(#gBtab)" stroke="#9c9c9c" stroke-width="0.6"/>
<path d="M51.8 415 H80.5 V424.3 Q80.5 425.8 79.0 425.8 H53.3 Q51.8 425.8 51.8 424.3Z" fill="url(#gBtab)" stroke="#9c9c9c" stroke-width="0.6"/>
<path d="M81.3 415 H98 V424.3 Q98 425.8 96.5 425.8 H82.8 Q81.3 425.8 81.3 424.3Z" fill="url(#gBtab)" stroke="#9c9c9c" stroke-width="0.6"/>
<path d="M99 415 H116.4 V424.3 Q116.4 425.8 114.9 425.8 H100.5 Q99 425.8 99 424.3Z" fill="url(#gBtab)" stroke="#9c9c9c" stroke-width="0.6"/>
<path d="M0.8 414 H33.5 V426.5 Q33.5 428.3 31.7 428.3 H2.6 Q0.8 428.3 0.8 426.5Z" fill="#e8e8e8" stroke="#a0a0a0" stroke-width="0.6"/>
<text x="2.9" y="423.8" font-family="Liberation Serif" font-size="7" font-weight="bold" fill="#222" textLength="28" lengthAdjust="spacingAndGlyphs">hyperMILL</text>
<use href="#gl1" x="36.50" y="417.8" width="5.6" height="6" opacity="0.72"/><use href="#gl2" x="42.90" y="417.8" width="5.6" height="6" opacity="0.72"/>
<use href="#gl3" x="54.00" y="417.8" width="5.6" height="6" opacity="0.72"/><use href="#gl0" x="60.90" y="417.8" width="5.6" height="6" opacity="0.72"/><use href="#gl1" x="67.80" y="417.8" width="5.6" height="6" opacity="0.72"/><use href="#gl2" x="74.70" y="417.8" width="5.6" height="6" opacity="0.72"/>
<use href="#gl3" x="83.30" y="417.8" width="5.6" height="6" opacity="0.72"/><use href="#gl0" x="90.10" y="417.8" width="5.6" height="6" opacity="0.72"/>
<use href="#gl1" x="101.20" y="417.8" width="5.6" height="6" opacity="0.72"/><use href="#gl2" x="108.00" y="417.8" width="5.6" height="6" opacity="0.72"/>
<rect x="0" y="432.3" width="124" height="10.5" fill="url(#gTitle)"/>
<text x="2.4" y="440.8" font-family="Liberation Serif" font-size="7" font-weight="bold" fill="#2a2a2a" textLength="29.5" lengthAdjust="spacingAndGlyphs">hyperMILL</text>
<use href="#gl3" x="34.00" y="435.5" width="5.3" height="6" opacity="0.7"/><use href="#gl0" x="40.10" y="435.5" width="5.3" height="6" opacity="0.7"/>
<path d="M110.2 435.90000000000003 h2.6 v2.8 h-2.6z" stroke="#111" stroke-width="0.7" fill="#f4f4f4"/><rect x="109.8" y="435.3" width="3.4" height="1.1" fill="#111"/><path d="M109 437.90000000000003 h2.6 v2.2 h-2.6z" stroke="#111" stroke-width="0.7" fill="#ffffff"/><rect x="108.6" y="437.40000000000003" width="3.4" height="1" fill="#111"/><path d="M117.3 435.6 l3.6 4 M120.9 435.6 l-3.6 4" stroke="#1a1a1a" stroke-width="1.05"/>
<rect x="0" y="443" width="123.8" height="37" fill="#0d3a68"/>
<rect x="123.8" y="47" width="2.2" height="433" fill="#f4f4f4"/>
<rect x="124.6" y="47" width="0.6" height="433" fill="#c8c8c8"/>
<rect x="1.3" y="448.8" width="24.8" height="25" rx="2.2" fill="url(#gTile)"/>
<rect x="32.2" y="448.8" width="24.8" height="25" rx="2.2" fill="url(#gTile)"/>
<rect x="63" y="448.8" width="24.8" height="25" rx="2.2" fill="url(#gTile)"/>
<rect x="94" y="448.8" width="24.8" height="25" rx="2.2" fill="url(#gTile)"/>
<rect x="4.8" y="451.8" width="15.8" height="20" fill="#cfe0ee"/>
<path d="M4.8 452.0 L20.6 452.8 L20.6 456.2 L4.8 455.6Z" fill="#2a5a80"/>
<path d="M4.8 457.0 L20.6 457.8 L20.6 461.2 L4.8 460.6Z" fill="#2a5a80"/>
<path d="M4.8 462.0 L20.6 462.8 L20.6 466.2 L4.8 465.6Z" fill="#2a5a80"/>
<path d="M4.8 467.0 L20.6 467.8 L20.6 471.2 L4.8 470.6Z" fill="#2a5a80"/>
<rect x="16.8" y="451.2" width="3.4" height="3.2" fill="#c01828"/>
<ellipse cx="44.5" cy="453.5" rx="6" ry="3" fill="#f8fbff"/><ellipse cx="43" cy="452.5" rx="3" ry="2" fill="#ffffff"/>
<path d="M36 455.5 L53 455.5 L47.5 465 L47.5 469 L42.5 469 L42.5 465Z" fill="#1f5a88"/>
<path d="M52.5 456 Q56 457.5 53.5 462" stroke="#1f5a88" stroke-width="1.3" fill="none"/>
<path d="M39 469 L50 468.5 L52 472 L40 472.5Z" fill="#3a1a10"/><path d="M47 469 L51.5 469.5 L52 471.5 L48 471.5Z" fill="#801818"/>
<path d="M74.5 451.5 C80.5 451.5 84 455.5 84 460 L85.5 463 L83.8 463.8 L83.8 466 L81.5 466.8 L81 471.5 L72.5 471.5 L72.5 467 C68.5 465.5 66.5 462.5 66.5 459.5 C66.5 455 70 451.5 74.5 451.5Z" fill="#1f5a88"/>
<circle cx="74" cy="458.5" r="3" fill="#f0a0a0"/><circle cx="74" cy="458.5" r="1.2" fill="#c02030"/>
<path d="M98 454.0 L109 455.2 L109 457.2 L98 456.0Z" fill="#1f4a68"/>
<path d="M98 458.4 L109 459.59999999999997 L109 461.59999999999997 L98 460.4Z" fill="#1f4a68"/>
<path d="M98 462.8 L109 464.0 L109 466.0 L98 464.8Z" fill="#1f4a68"/>
<path d="M98 467.2 L109 468.4 L109 470.4 L98 469.2Z" fill="#1f4a68"/>
<polygon points="111.00,451.30 112.64,455.24 116.90,455.58 113.65,458.36 114.64,462.52 111.00,460.29 107.36,462.52 108.35,458.36 105.10,455.58 109.36,455.24" fill="#a81020"/>
<rect x="126" y="46.8" width="221" height="16.2" fill="#e4e4e6"/>
<rect x="126.3" y="47" width="16" height="15.8" fill="url(#gVtb)"/>
<rect x="143.3" y="47" width="16" height="15.8" fill="url(#gVtb)"/>
<rect x="160.3" y="47" width="16" height="15.8" fill="url(#gVtb)"/>
<rect x="177.3" y="47" width="16" height="15.8" fill="url(#gVtb)"/>
<rect x="194.3" y="47" width="16" height="15.8" fill="url(#gVtb)"/>
<rect x="211.3" y="47" width="16" height="15.8" fill="url(#gVtb)"/>
<rect x="228.3" y="47" width="16" height="15.8" fill="url(#gVtb)"/>
<rect x="245.3" y="47" width="16" height="15.8" fill="url(#gVtb)"/>
<rect x="262.3" y="47" width="16" height="15.8" fill="url(#gVtb)"/>
<rect x="279.3" y="47" width="16" height="15.8" fill="url(#gVtb)"/>
<rect x="296.3" y="47" width="16" height="15.8" fill="url(#gVtb)"/>
<rect x="313.3" y="47" width="16" height="15.8" fill="url(#gVtb)"/>
<rect x="330.3" y="47" width="16" height="15.8" fill="url(#gVtb)"/>
<rect x="142.1" y="47" width="1" height="16" fill="#3a3a50"/>
<rect x="159.1" y="47" width="1" height="16" fill="#3a3a50"/>
<rect x="176.1" y="47" width="1" height="16" fill="#3a3a50"/>
<rect x="193.1" y="47" width="1" height="16" fill="#3a3a50"/>
<rect x="210.1" y="47" width="1" height="16" fill="#3a3a50"/>
<rect x="227.1" y="47" width="1" height="16" fill="#3a3a50"/>
<rect x="244.1" y="47" width="1" height="16" fill="#3a3a50"/>
<rect x="261.1" y="47" width="1" height="16" fill="#3a3a50"/>
<rect x="278.1" y="47" width="1" height="16" fill="#3a3a50"/>
<rect x="295.1" y="47" width="1" height="16" fill="#3a3a50"/>
<rect x="312.1" y="47" width="1" height="16" fill="#3a3a50"/>
<rect x="329.1" y="47" width="1" height="16" fill="#3a3a50"/>
<rect x="346.1" y="47" width="1" height="16" fill="#3a3a50"/>
<path d="M130.5 48.8 L136.5 48.8 L139.5 52 L139.5 61 L130.5 61Z" fill="#c4c4c8" stroke="#9a9aa0" stroke-width="0.6"/><path d="M136.5 48.8 V52 H139.5" fill="#e8e8ea" stroke="#9a9aa0" stroke-width="0.5"/><path d="M132 54 h5 M132 56.5 h5 M132 59 h4" stroke="#a8a8ac" stroke-width="0.6"/>
<path d="M145 54.5 L151 53 L157.5 54.5 L157.5 60 L151 61.5 L145 60Z" fill="#8a5a20"/><path d="M145 54.5 L147 49.5 L150 53.5Z" fill="#4a3020"/><path d="M151 53 L154.5 49 L157.5 54.5Z" fill="#c8a8a0"/><path d="M147 49.5 L154.5 49 L151 53Z" fill="#b89890"/><path d="M148 55.5 L148 60 M153.5 55.5 L153.5 60" stroke="#6a4010" stroke-width="0.6"/>
<rect x="161.8" y="48.8" width="13.2" height="12.2" fill="#1e5a68"/><path d="M164.5 51.2 Q172.5 50 172.8 55 Q172.5 60 164.5 58.8" stroke="#c8dce4" stroke-width="2.2" fill="none"/><circle cx="167.8" cy="55" r="1.1" fill="#e8f0f4"/><path d="M163.5 53.8 h2.5" stroke="#c8dce4" stroke-width="0.8"/>
<path d="M179.5 53.5 L185 52 L191.5 53.5 L191.5 60.5 L185 62 L179.5 60.5Z" fill="#8a5a2a"/><path d="M180 53 L181.5 49 L184 51 L186.5 48.5 L189.5 50.5 L191 48.8 L191.5 53.5 L185 55Z" fill="#e01818"/><path d="M182 56 v4 M188 56 v4" stroke="#5a3a18" stroke-width="0.6"/>
<ellipse cx="202" cy="55" rx="6" ry="6.6" fill="#1e5a88"/><ellipse cx="201.3" cy="55" rx="3.8" ry="4.6" fill="#c8d4e0"/><ellipse cx="201.3" cy="55" rx="1.5" ry="2" fill="#8a9aa8"/><path d="M199 53 l2.3 2" stroke="#404a58" stroke-width="0.6"/>
<path d="M212.5 61.5 Q213.5 55 218.5 54 Q223.5 55 225.5 61.5 L222.5 61.5 Q221 57.5 218.5 57.5 Q216 57.5 215.5 61.5Z" fill="#2a6aa8"/><circle cx="219" cy="50.8" r="2.3" fill="#c8b8c8"/><path d="M217 53.5 L221 53.5 L220 56 L218 56Z" fill="#a8c8e0"/><path d="M221.5 57 L224.5 54.5" stroke="#3a80b8" stroke-width="1.2"/>
<rect x="229.5" y="55" width="6" height="6" fill="#1f5a80"/><path d="M237.7 52.8 L236.1 59.3 Q235.9 60.3 237.1 60.0" stroke="#5a1838" stroke-width="1.5" fill="none" stroke-linecap="round"/><circle cx="238.7" cy="50.0" r="1" fill="#5a1838"/>
<text x="246.3" y="61" font-family="Liberation Sans" font-size="8" font-weight="bold" fill="#3a7a50">2</text><path d="M254.2 52.8 L252.6 59.3 Q252.4 60.3 253.6 60.0" stroke="#5a1838" stroke-width="1.5" fill="none" stroke-linecap="round"/><circle cx="255.2" cy="50.0" r="1" fill="#5a1838"/>
<path d="M266 50.5 Q274 50 274 55 Q274 60.5 267 60.5" stroke="#a01820" stroke-width="2.3" fill="none"/><path d="M265 49 L268 52 L265 53Z" fill="#a01820"/>
<rect x="280.3" y="47.3" width="15.8" height="14.8" fill="#dcdcdc"/><path d="M292 51 Q286 49.5 285 55 Q286 60.5 292 59" stroke="#b8b8b8" stroke-width="1.8" fill="none"/>
<path d="M299 49 L311 49 L306 54 L306 58 L304 58 L304 54Z" fill="#b0b0b0"/><text x="298.5" y="61.5" font-family="Liberation Sans" font-size="8" font-weight="bold" fill="#8a1828">R</text>
<path d="M315 52.5 L322 49 L329 52.5 L322 56Z" fill="#40a0e0"/><path d="M315 52.5 L322 56 L322 61 L315 57.5Z" fill="#2a78b8"/><path d="M322 56 L329 52.5 L329 57.5 L322 61Z" fill="#1a5a98"/>
<path d="M338.5 49 L345.5 61 L331.5 61Z" fill="#e0d020"/><path d="M338.5 52 V57.5" stroke="#202020" stroke-width="1.6"/><circle cx="338.5" cy="59.3" r="0.9" fill="#202020"/>
<rect x="369" y="463.5" width="170.5" height="16.5" fill="#a8b0b8"/>
<rect x="369.6" y="464.1" width="15.8" height="15.9" fill="url(#gVtb)"/>
<rect x="386.65000000000003" y="464.1" width="15.8" height="15.9" fill="url(#gVtb)"/>
<rect x="403.70000000000005" y="464.1" width="15.8" height="15.9" fill="url(#gVtb)"/>
<rect x="420.75" y="464.1" width="15.8" height="15.9" fill="url(#gVtb)"/>
<rect x="437.8" y="464.1" width="15.8" height="15.9" fill="url(#gVtb)"/>
<rect x="454.85" y="464.1" width="15.8" height="15.9" fill="url(#gVtb)"/>
<rect x="471.90000000000003" y="464.1" width="15.8" height="15.9" fill="url(#gVtb)"/>
<rect x="488.95000000000005" y="464.1" width="15.8" height="15.9" fill="url(#gVtb)"/>
<rect x="506.0" y="464.1" width="15.8" height="15.9" fill="url(#gVtb)"/>
<rect x="523.0500000000001" y="464.1" width="15.8" height="15.9" fill="url(#gVtb)"/>
<circle cx="377.5" cy="472" r="5.2" fill="#7a7a7e"/><circle cx="377.5" cy="472" r="4" fill="#404044"/><circle cx="377.5" cy="472" r="2.4" fill="#1a1a1c"/>
<circle cx="394.5" cy="471.8" r="5.8" fill="#1ab8d8"/><path d="M391 472 h7 M394.5 468.5 v7" stroke="#f0f8ff" stroke-width="1.4"/><path d="M389 477 l2 -2" stroke="#606060" stroke-width="0.8"/>
<path d="M405 477 L415 467 M405 477 H415 M407 474.5 L413 474.5" stroke="#8a8a90" stroke-width="0.9" fill="none" stroke-linecap="round" stroke-linejoin="round"/>
<path d="M421 477 L425 472 L428 474 L424 478Z" fill="#c07030"/><path d="M425 472 L432 466" stroke="#2a5aa0" stroke-width="1.8"/><path d="M421 478 H431" stroke="#404040" stroke-width="0.8"/>
<path d="M439 477 L449 467" stroke="#c02030" stroke-width="1.3"/><path d="M441 468 L447 476" stroke="#606870" stroke-width="0.8"/><circle cx="444" cy="472" r="1.3" fill="#c02030"/>
<rect x="454.5" y="464.1" width="15.8" height="15.9" fill="#d0d0d4"/><text x="455" y="476.5" font-family="Liberation Sans" font-size="11" fill="#9a9aa0">00</text>
<circle cx="476" cy="467.5" r="1.8" fill="#d02030"/><path d="M476 469 V476 M473 477 H482 L482 471" stroke="#505060" stroke-width="0.8" fill="none"/>
<rect x="493" y="466" width="3.5" height="4" fill="#5a3aa0"/><rect x="490" y="470" width="9" height="8" fill="#3a6aa0"/><rect x="491.5" y="472" width="6" height="3" fill="#c03040"/>
<path d="M507 478 L515 466" stroke="#c07830" stroke-width="2.4"/><path d="M513 468.5 L516 464.5" stroke="#303040" stroke-width="1.5"/><path d="M506.5 478.5 L508.5 475.5" stroke="#202020" stroke-width="1"/>
<circle cx="531.5" cy="472" r="5.4" fill="none" stroke="#9a9aa2" stroke-width="0.9"/><path d="M526.5 472 h10 M531.5 467 v10 M528 468.5 l7 7 M535 468.5 l-7 7" stroke="#b0b0b8" stroke-width="0.6"/>
<rect x="693.3" y="465.9" width="75.6" height="11" fill="#fafafa"/>
<rect x="696.5" y="467.3" width="6.5" height="8" fill="#e0a0a0"/><rect x="697.8" y="468.8" width="4" height="5" fill="none" stroke="#703030" stroke-width="0.6"/>
<path d="M708.5 468 v7.5 M705.5 469.5 h6 v3.5 h-6z" stroke="#404048" stroke-width="0.9" fill="none"/>
<path d="M723.5 468 Q726 472 722 475 Q719 475.5 718 474 Q721 474 722.5 471Z" fill="#303038"/>
<path d="M730 471.5 h1.5 M734 470.5 v2.5 M733 471.8 h2" stroke="#606068" stroke-width="0.8"/>
<rect x="739" y="469" width="7.5" height="5" rx="1" fill="#505058"/><rect x="740" y="470" width="5.5" height="1.5" fill="#d0d0d8"/>
<circle cx="753" cy="469.5" r="1.5" fill="#404048"/><path d="M750 476 L751 472 H755 L756 476Z" fill="#404048"/>
<path d="M760.5 476 L765 471.5" stroke="#404048" stroke-width="1.3"/><circle cx="765.5" cy="470.5" r="1.7" fill="#404048"/><circle cx="766" cy="470" r="0.6" fill="#fafafa"/>
<g stroke="#14253c" stroke-width="0.8" stroke-linejoin="round">
<!-- right face -->
<path d="M464.6 323 L521 210 L520.5 266 L464.6 375.5Z" fill="#121a24"/>
<path d="M464.6 345.5 L520.2 240.5" stroke="#4c627a" stroke-width="1.1" fill="none"/>
<!-- front faces -->
<path d="M163 235 L464.6 323 L464.6 344.5 L162.5 260.3Z" fill="#324c65"/>
<path d="M162.5 260.3 L464.6 344.5 L464.6 351.5 L161.8 266.3Z" fill="#52708e"/>
<path d="M161.8 266.3 L464.6 351.5 L464.6 375.5 L161.5 288.5Z" fill="#2f4961"/>
<!-- top face -->
<path d="M219 123 L521 210 L464.6 323 L163 235Z" fill="#47668a"/>
<!-- left pocket -->
<path d="M188.7 220.4 L222.3 150.4 Q226 141 238.3 142.2 L336 169.3 Q346 172.5 344.6 177.5 L335 201.2 L311.5 250 Q306 260.5 295.5 260.3 L197.5 232.5 Q189 229 188.7 220.4Z" fill="url(#lw1)"/>
<path d="M243.5 143.6 L336 169.3 Q346 172.5 344.6 177.5 L335 201.2 L243.5 174.6Z" fill="#2f4963"/>
<path d="M197.5 232.5 L223 178.5 Q226 173.5 233 173.5 L243.5 174.6 L335 201.2 L311.5 250 Q306 260.5 295.5 260.3Z" fill="#43627f"/>
<path d="M243.5 143.6 L243.5 174.6 M334.3 168.8 L334.3 201" stroke="#16283e" fill="none"/>
<!-- right pocket -->
<path d="M335.6 260.6 L370 192.5 Q375 182.5 385.6 183.5 L488.8 210.6 Q502 214 499.7 229.4 L466.9 298 Q462 308 450 307.8 L348 279.4 Q336 274 335.6 260.6Z" fill="url(#lw2)"/>
<path d="M395.6 184.5 L488.8 210.6 Q502 214 499.7 229.4 L492 246 L485.6 244.5 L395.6 218.3Z" fill="#2f4963"/>
<path d="M348 279.4 L375 222.5 Q378 218 385 218 L395.6 218.3 L485.6 244.5 Q493 246.5 492.2 247.5 L466.9 298 Q462 308 450 307.8Z" fill="#43627f"/>
<path d="M395.6 184.5 L395.6 218.3 M485.6 210 L485.6 244.5" stroke="#16283e" fill="none"/>
</g>
<!-- triad -->
<line x1="266.9" y1="201" x2="266.9" y2="190" stroke="#101830" stroke-width="1.6"/>
<line x1="267" y1="200.5" x2="280.8" y2="173.5" stroke="#2faa2f" stroke-width="2"/>
<line x1="268.5" y1="201.3" x2="313.8" y2="215.2" stroke="#c8202c" stroke-width="2.4"/>
<circle cx="267" cy="201.3" r="1" fill="#d8c8d0"/>
<text x="264.3" y="189.6" font-size="7.6" font-weight="bold" fill="#1838e0" font-family="Liberation Sans">Z</text>
<text x="277.6" y="176" font-size="7.4" font-weight="bold" fill="#38b838" font-family="Liberation Sans">Y</text>
<text x="317" y="219.2" font-size="6.4" font-weight="bold" fill="#d82030" font-family="Liberation Sans">X</text>
<!-- cursor -->
<path d="M425.7 122 L425.9 129.5 L427.5 128 L429 131 L430.2 130.4 L428.8 127.4 L431 127.2Z" fill="#eef2ff" stroke="#1a2040" stroke-width="0.5"/>

</svg></div></body></html>
